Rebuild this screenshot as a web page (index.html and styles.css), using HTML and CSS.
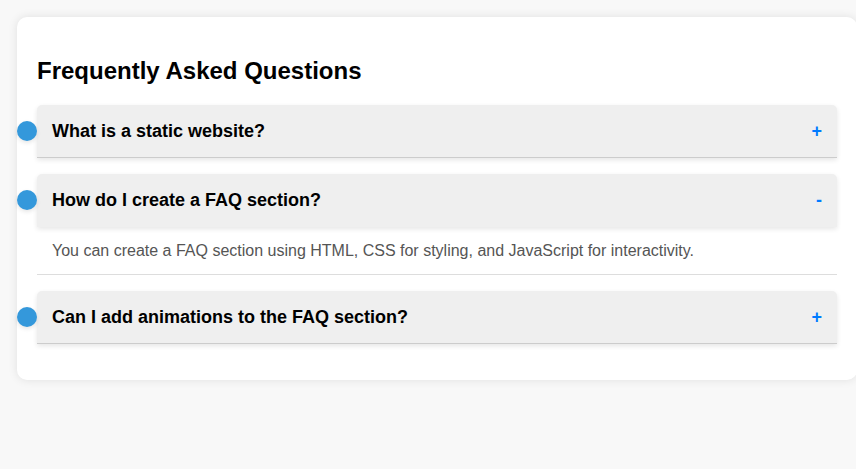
FILE: index.html
```html
<!DOCTYPE html>
<html>
<head>
<meta charset="utf-8">
<link rel="stylesheet" href="styles.css">
</head>
<body>
<div class="faq-container">
  <h2 class="faq-title">Frequently Asked Questions</h2>
  <div class="faq-item">
    <div class="faq-question"><span>What is a static website?</span><span class="toggle">+</span></div>
  </div>
  <div class="faq-item open">
    <div class="faq-question"><span>How do I create a FAQ section?</span><span class="toggle">-</span></div>
    <div class="faq-answer">You can create a FAQ section using HTML, CSS for styling, and JavaScript for interactivity.</div>
  </div>
  <div class="faq-item">
    <div class="faq-question"><span>Can I add animations to the FAQ section?</span><span class="toggle">+</span></div>
  </div>
</div>
</body>
</html>
```
FILE: styles.css
```css
body {
  margin: 0;
  padding: 17px;
  background: #f8f8f8;
  font-family: "Liberation Sans", Arial, sans-serif;
}
.faq-container {
  width: 800px;
  padding: 0 20px;
  background: #fff;
  border-radius: 10px;
  box-shadow: 0 0 10px rgba(0, 0, 0, 0.1);
  display: flow-root;
}
.faq-title {
  font-size: 24px;
  margin: 40px 0 20px;
  color: #000;
}
.faq-item {
  margin-bottom: 16px;
}
.faq-item:last-child {
  margin-bottom: 36px;
}
.faq-question {
  position: relative;
  display: flex;
  justify-content: space-between;
  align-items: center;
  padding: 15px;
  line-height: 22px;
  background: #efefef;
  border-radius: 5px 5px 0 0;
  border-bottom: 1px solid #ccc;
  box-shadow: 0 2px 5px rgba(0, 0, 0, 0.1);
  font-size: 18px;
  font-weight: bold;
  color: #000;
}
.faq-item.open .faq-question {
  border-bottom-color: transparent;
}
.faq-question::before {
  content: "";
  position: absolute;
  left: -20px;
  top: 50%;
  width: 20px;
  height: 20px;
  margin-top: -10px;
  border-radius: 50%;
  background: #3498db;
  box-shadow: 0 2px 4px rgba(0, 0, 0, 0.1);
}
.toggle {
  color: #007bff;
  font-size: 18px;
  font-weight: bold;
}
.faq-answer {
  padding: 15px 15px 14px;
  line-height: 18px;
  color: #555;
  font-size: 16px;
  border-bottom: 1px solid #ddd;
}
```
